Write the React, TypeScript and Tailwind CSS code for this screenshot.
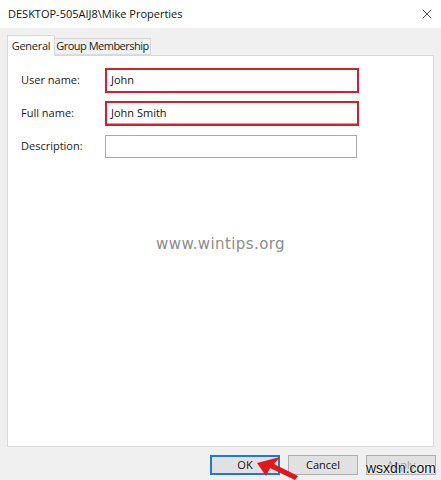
import { X } from "lucide-react";

const font = { fontFamily: '"Open Sans", "Noto Sans", sans-serif' };

const Field = ({
  label,
  value,
  highlight,
  underline,
}: {
  label: string;
  value: string;
  highlight?: boolean;
  underline?: boolean;
}) => (
  <div className="flex items-center h-[24px]">
    <span className="w-[84px] text-[11px] text-[#1a1a1a]">{label}</span>
    <div
      className={
        highlight
          ? "relative w-[254px] h-[25px] border-2 border-[#d3202f] bg-white flex items-center px-[4px]"
          : "w-[252px] h-[23px] border border-[#a9a9a9] bg-white"
      }
    >
      <span className="text-[11px] text-[#111]">{value}</span>
      {underline && (
        <div className="absolute left-0 right-0 bottom-0 h-px bg-[#7cb7e8]" />
      )}
    </div>
  </div>
);

export default function App() {
  return (
    <div
      className="relative w-[441px] h-[480px] bg-[#f0f0f0] overflow-hidden flex flex-col"
      style={font}
    >
      <div className="h-[28px] bg-white flex items-center justify-between pl-[8px] pr-[6px] shrink-0">
        <span className="text-[11px] text-[#111]">DESKTOP-505AIJ8\Mike Properties</span>
        <X size={16} strokeWidth={1.2} className="text-[#222]" />
      </div>

      <div className="flex items-end pl-[7px] mt-[7px] h-[20px] relative z-10">
        <div className="h-[21px] w-[48px] bg-white border border-b-0 border-[#d9d9d9] text-[11px] text-[#222] flex items-center justify-center -mb-px whitespace-nowrap tracking-[-0.3px]">
          General
        </div>
        <div className="h-[17px] w-[96px] bg-[#f0f0f0] border border-l-0 border-[#d9d9d9] text-[11px] text-[#222] flex items-center justify-center whitespace-nowrap tracking-[-0.5px]">
          Group Membership
        </div>
      </div>

      <div className="mx-[7px] h-[392px] bg-white border border-[#d9d9d9] relative flex flex-col gap-[9px] pt-[12px] pl-[13px]">
        <Field label="User name:" value="John" highlight />
        <Field label="Full name:" value="John Smith" highlight underline />
        <Field label="Description:" value="" />
        <div className="absolute left-0 right-0 top-[177px] flex justify-center">
          <span
            className="text-[15px] text-[#8c8c8c] tracking-[0.4px]"
            style={{ fontFamily: '"DejaVu Sans", sans-serif' }}
          >
            www.wintips.org
          </span>
        </div>
      </div>

      <div className="flex justify-end gap-[8px] pr-[5px] mt-[8px]">
        <div className="w-[70px] h-[20px] bg-[#e1e1e1] border-2 border-[#1f7ad1] text-[11px] text-[#111] flex items-center justify-center">
          OK
        </div>
        <div className="w-[70px] h-[20px] bg-[#e1e1e1] border border-[#adadad] text-[11px] text-[#111] flex items-center justify-center">
          Cancel
        </div>
        <div className="w-[70px] h-[20px] bg-[#e1e1e1] border border-[#adadad] text-[11px] text-[#9a9a9a] flex items-center justify-center">
          Apply
        </div>
      </div>

      <svg
        className="absolute left-[254px] top-[454px]"
        width="46"
        height="26"
        viewBox="0 0 46 26"
      >
        <polygon points="3,9 26,3 20,10 44,22 41,26 16,14 12,22" fill="#e3161b" />
      </svg>

      <span
        className="absolute left-[366px] top-[458px] text-[14px] text-[#111]"
        style={{ fontFamily: '"Liberation Sans", sans-serif', textShadow: "0 0 2px #fff, 0 0 2px #fff" }}
      >
        wsxdn.com
      </span>
    </div>
  );
}
